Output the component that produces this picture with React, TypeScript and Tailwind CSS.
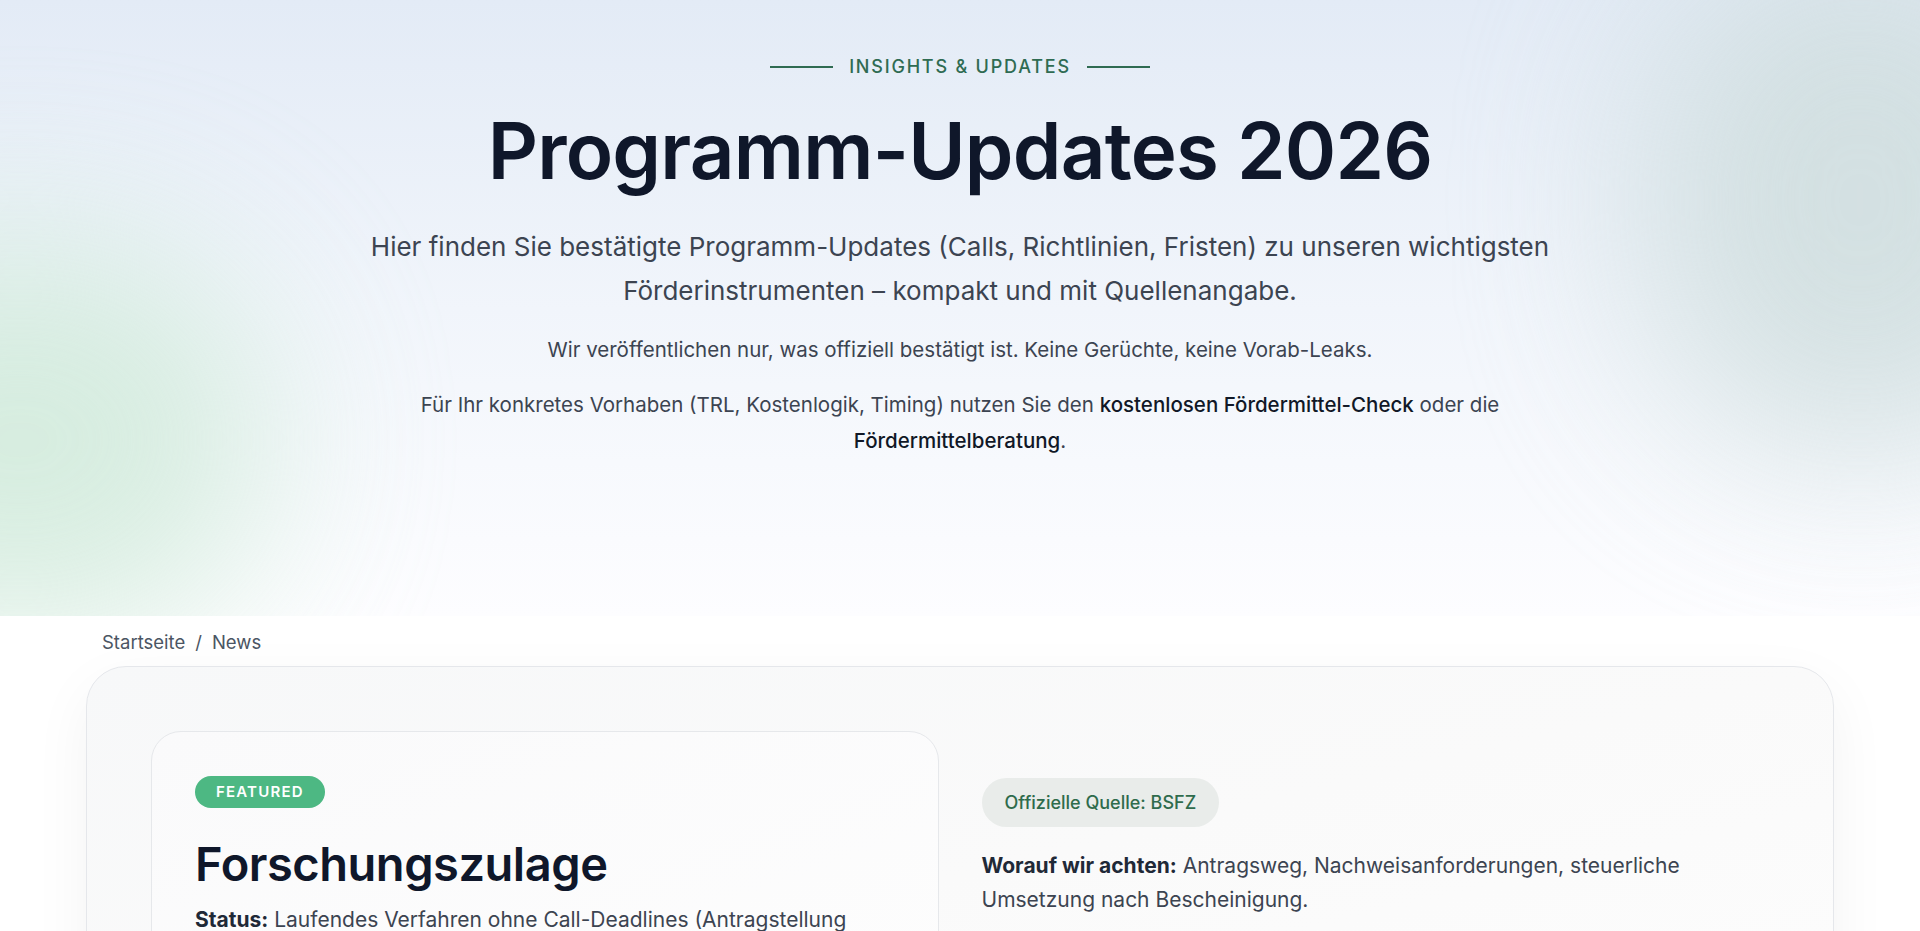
const font = { fontFamily: '"Inter", "Noto Sans", sans-serif' };

function Eyebrow() {
  return (
    <div className="flex items-center justify-center gap-4">
      <span className="h-[2px] w-[63px] bg-[#2f6b52]" />
      <span className="text-[18px] font-medium uppercase tracking-[0.1em] leading-[26px] text-[#2f6b52]">
        Insights &amp; Updates
      </span>
      <span className="h-[2px] w-[63px] bg-[#2f6b52]" />
    </div>
  );
}

function Hero() {
  return (
    <section className="relative h-[616px] overflow-hidden bg-gradient-to-b from-[#e3ebf6] via-[#f1f5fb] to-[#fdfdff]">
      {/* soft colour blobs */}
      <div className="pointer-events-none absolute -left-[230px] top-[240px] h-[400px] w-[500px] rounded-full bg-[#cce9d6] opacity-75 blur-[90px]" />
      <div className="pointer-events-none absolute -right-[160px] -top-[60px] h-[520px] w-[440px] rounded-full bg-[#cddcdc] opacity-80 blur-[90px]" />

      <div className="relative flex flex-col items-center pt-[54px] text-center">
        <Eyebrow />
        <h1 className="mt-[27px] text-[78px] font-semibold leading-[88px] tracking-[-0.01em] text-[#0f172a]">
          Programm-Updates 2026
        </h1>
        <p className="mt-[30px] text-[26px] leading-[44px] text-[#3c4451]">
          Hier finden Sie bestätigte Programm-Updates (Calls, Richtlinien, Fristen) zu unseren wichtigsten
          <br />
          Förderinstrumenten – kompakt und mit Quellenangabe.
        </p>
        <p className="mt-[19px] text-[20.5px] leading-[36px] text-[#3c4451]">
          Wir veröffentlichen nur, was offiziell bestätigt ist. Keine Gerüchte, keine Vorab-Leaks.
        </p>
        <p className="mt-[19px] text-[20.5px] leading-[36px] text-[#3c4451]">
          Für Ihr konkretes Vorhaben (TRL, Kostenlogik, Timing) nutzen Sie den{" "}
          <a className="font-medium text-[#111827]">kostenlosen Fördermittel-Check</a> oder die
          <br />
          <a className="font-medium text-[#111827]">Fördermittelberatung</a>.
        </p>
      </div>
    </section>
  );
}

function FeaturedCard() {
  return (
    <article className="flex flex-col rounded-[30px] border border-[#e6e8eb] bg-gradient-to-br from-[#fafafb] to-[#fdfdfd] px-[43px] py-11">
      <span className="flex h-8 w-fit items-center rounded-full bg-[#4db883] px-[21px] text-[15px] font-semibold uppercase tracking-[0.08em] text-white">
        Featured
      </span>
      <h2 className="mt-[26px] text-[47px] font-semibold leading-[60px] tracking-[-0.01em] text-[#0f172a]">
        Forschungszulage
      </h2>
      <p className="mt-[9px] text-[21px] leading-[34px] text-[#3c4451]">
        <strong className="font-bold text-[#1f2937]">Status:</strong> Laufendes Verfahren ohne Call-Deadlines (Antragstellung
        jederzeit möglich).
      </p>
    </article>
  );
}

function SourceColumn() {
  return (
    <div className="flex flex-col pt-[47px]">
      <span className="flex h-[49px] w-fit items-center rounded-full bg-[#e9ecea] px-[23px] text-[18px] font-medium text-[#2f6b4c]">
        Offizielle Quelle: BSFZ
      </span>
      <p className="mt-[22px] text-[21px] leading-[34px] text-[#3c4451]">
        <strong className="font-bold text-[#1f2937]">Worauf wir achten:</strong> Antragsweg, Nachweisanforderungen, steuerliche
        <br />
        Umsetzung nach Bescheinigung.
      </p>
    </div>
  );
}

export default function App() {
  return (
    <div className="min-h-screen bg-white" style={font}>
      <Hero />
      <main className="mx-auto w-[1748px]">
        <nav className="flex items-center gap-[10px] px-4 pt-[14px] text-[18.5px] leading-6 text-[#4b5563]">
          <a>Startseite</a>
          <span>/</span>
          <span>News</span>
        </nav>
        <section className="mt-[12px] rounded-[40px] border border-[#e5e7eb] bg-gradient-to-br from-[#f7f8f9] via-[#fafafa] to-[#fdfdfd] p-16 shadow-[0_20px_60px_rgba(15,23,42,0.05)]">
          <div className="grid grid-cols-2 gap-[43px]">
            <FeaturedCard />
            <SourceColumn />
          </div>
        </section>
      </main>
    </div>
  );
}
